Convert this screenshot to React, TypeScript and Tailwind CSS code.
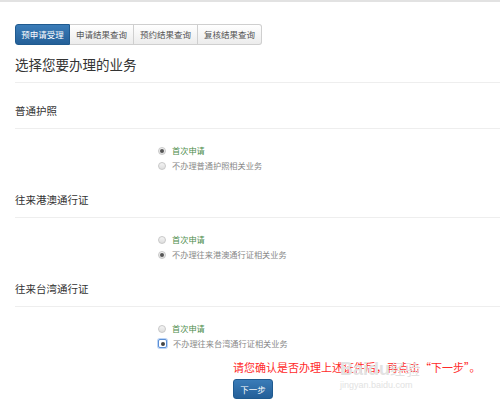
import React from "react";

const font = { fontFamily: '"Noto Sans CJK SC", "Noto Sans", sans-serif' };

function Radio({ checked, focus }: { checked?: boolean; focus?: boolean }) {
  if (focus) {
    return (
      <span className="w-[9px] h-[9px] rounded-[2px] border border-[#5b8fd6] bg-white flex items-center justify-center shadow-[0_0_0_1px_#bcd4f5]">
        <span className="w-[4px] h-[4px] rounded-full bg-[#444]" />
      </span>
    );
  }
  return (
    <span className="w-[8px] h-[8px] rounded-full border border-[#c8c8c8] bg-gradient-to-b from-[#f4f4f4] to-[#dedede] flex items-center justify-center">
      {checked && <span className="w-[4px] h-[4px] rounded-full bg-[#555]" />}
    </span>
  );
}

function Section({
  title,
  other,
  choice,
  focus,
}: {
  title: string;
  other: string;
  choice: number;
  focus?: boolean;
}) {
  return (
    <div className="mt-[17px]">
      <div className="text-[10.5px] leading-[20px] text-[#333] pb-[7px] border-b border-[#eee]">{title}</div>
      <div className="pl-[143px] mt-[14px] flex flex-col">
        <div className="h-[15px] flex items-center gap-[6px]">
          <Radio checked={choice === 0} />
          <span className="text-[8.2px] text-[#4c8c4a]">首次申请</span>
        </div>
        <div className="h-[15px] flex items-center gap-[6px]">
          <Radio checked={choice === 1} focus={focus} />
          <span className="text-[8.2px] text-[#888]">{other}</span>
        </div>
      </div>
    </div>
  );
}

export default function App() {
  return (
    <div className="w-[500px] h-[407px] bg-white border-t-2 border-[#e2e2e2] relative overflow-hidden" style={font}>
      <div className="pl-[15px]">
        {/* Tabs */}
        <div className="mt-[22px] flex h-[21px] text-[8.5px]">
          <div className="w-[55px] flex items-center justify-center text-white rounded-l-[3px] bg-gradient-to-b from-[#3a7cb8] to-[#245f98] border border-[#1f5a8f]">
            预申请受理
          </div>
          {["申请结果查询", "预约结果查询", "复核结果查询"].map((t, i) => (
            <div
              key={t}
              className={`w-[64px] flex items-center justify-center text-[#555] bg-gradient-to-b from-white to-[#ececec] border border-l-0 border-[#cfcfcf] ${
                i === 2 ? "rounded-r-[3px]" : ""
              }`}
            >
              {t}
            </div>
          ))}
        </div>

        <div className="mt-[9px] text-[13.5px] leading-[20px] text-[#333] pb-[8px] border-b border-[#eee]">
          选择您要办理的业务
        </div>

        <div className="pt-[1px]">
          <Section title="普通护照" other="不办理普通护照相关业务" choice={0} />
          <Section title="往来港澳通行证" other="不办理往来港澳通行证相关业务" choice={1} />
          <Section title="往来台湾通行证" other="不办理往来台湾通行证相关业务" choice={1} focus />
        </div>

        <div className="pl-[218px] mt-[9px]">
          <div className="text-[11px] leading-[14px] text-[#ff2a2a] whitespace-nowrap">
            请您确认是否办理上述证件后，再点击“下一步”。
          </div>
          <button className="mt-[4px] w-[40px] h-[20px] rounded-[3px] bg-gradient-to-b from-[#3a7cb8] to-[#245f98] border border-[#1f5a8f] text-white text-[8.5px]">
            下一步
          </button>
        </div>
      </div>

      {/* watermark */}
      <div className="absolute left-[340px] top-[358px] text-[#e2e2e2] leading-none pointer-events-none">
        <div className="text-[18px] font-bold" style={{ fontFamily: '"Liberation Sans", "Noto Sans CJK SC", sans-serif' }}>
          Baidu<span className="text-[15px] font-normal">经验</span>
        </div>
        <div className="text-[9px] mt-[3px]" style={{ fontFamily: '"Liberation Sans", sans-serif' }}>
          jingyan.baidu.com
        </div>
      </div>
    </div>
  );
}
